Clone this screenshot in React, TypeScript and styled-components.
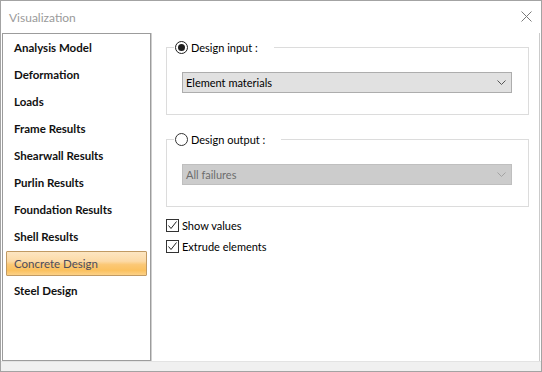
import { styled, createGlobalStyle } from 'styled-components';

const GlobalStyle = createGlobalStyle`
  html, body {
    margin: 0;
    padding: 0;
    background: #ffffff;
  }
  body {
    font-family: Lato, 'Noto Sans', sans-serif;
    font-size: 11px;
    color: #000;
  }
`;

const Window = styled.div`
  width: 542px;
  height: 372px;
  box-sizing: border-box;
  border: 1px solid #a3a3a3;
  background: #ffffff;
  display: flex;
  flex-direction: column;
`;

const TitleBar = styled.div`
  height: 32px;
  flex: none;
  display: flex;
  align-items: center;
  justify-content: space-between;
  padding: 0 9px 0 8px;
`;

const Title = styled.span`
  color: #9a9a9a;
  font-size: 12px;
`;

const CloseButton = styled.button`
  border: none;
  background: none;
  padding: 0;
  width: 11px;
  height: 11px;
  display: flex;
  margin-top: -2px;
`;

const Body = styled.div`
  flex: 1;
  display: flex;
  padding: 0 1px;
  min-height: 0;
`;

const NavList = styled.ul`
  width: 149px;
  box-sizing: border-box;
  height: 328px;
  margin: 0;
  padding: 1px 3px;
  list-style: none;
  border: 1px solid #9c9c9c;
  background: #fff;
  display: flex;
  flex-direction: column;
  gap: 2px;
`;

const NavItem = styled.li<{ $active?: boolean }>`
  height: 25px;
  flex: none;
  box-sizing: border-box;
  display: flex;
  align-items: center;
  padding-left: 7px;
  border: 1px solid ${(p) => (p.$active ? '#c19a63' : 'transparent')};
  border-radius: 1px;
  font-size: 11.5px;
  font-weight: ${(p) => (p.$active ? 400 : 700)};
  color: ${(p) => (p.$active ? '#4c4c5e' : '#111')};
  background: ${(p) =>
    p.$active
      ? 'linear-gradient(#fde6c2 0%, #fcdaa6 40%, #fbc875 55%, #fbc15f 80%, #fcd187 100%)'
      : 'transparent'};
`;

const Panel = styled.div`
  width: 389px;
  height: 329px;
  box-sizing: border-box;
  border-left: 1px solid #cfcfcf;
  border-right: 1px solid #cbcbcb;
  padding: 6px 10px 0 14px;
  display: flex;
  flex-direction: column;
`;

const Group = styled.fieldset<{ $gapTop?: number }>`
  margin: ${(p) => p.$gapTop ?? 0}px 0 0 0;
  border: 1px solid #dcdcdc;
  padding: 17px 16px 21px 15px;
  min-width: 0;
`;

const Legend = styled.legend`
  margin-left: -8px;
  padding: 0 16px 0 1px;
  height: 16px;
  display: flex;
  align-items: center;
  gap: 3px;
`;

const Radio = styled.span<{ $checked?: boolean }>`
  width: 13px;
  height: 13px;
  box-sizing: border-box;
  border-radius: 50%;
  border: 1px solid ${(p) => (p.$checked ? '#1e1e1e' : '#333')};
  display: flex;
  align-items: center;
  justify-content: center;
  background: #fff;

  &::after {
    content: '';
    width: 7px;
    height: 7px;
    border-radius: 50%;
    background: ${(p) => (p.$checked ? '#1e1e1e' : 'transparent')};
  }
`;

const Combo = styled.div<{ $disabled?: boolean }>`
  height: 21px;
  box-sizing: border-box;
  border: 1px solid ${(p) => (p.$disabled ? '#bfbfbf' : '#adadad')};
  background: ${(p) => (p.$disabled ? '#cccccc' : '#e1e1e1')};
  color: ${(p) => (p.$disabled ? '#6d6d6d' : '#000')};
  display: flex;
  align-items: center;
  justify-content: space-between;
  padding: 0 5px 0 3px;
`;

const CheckRow = styled.label<{ $first?: boolean }>`
  height: 21px;
  display: flex;
  align-items: center;
  gap: 3px;
  margin-top: ${(p) => (p.$first ? 8 : 0)}px;
`;

const Box = styled.span`
  width: 13px;
  height: 13px;
  box-sizing: border-box;
  border: 1px solid #333;
  background: #fff;
  display: flex;
`;

const Chevron = ({ color }: { color: string }) => (
  <svg width="9" height="5" viewBox="0 0 9 5">
    <path d="M0.5 0.5 L4.5 4.5 L8.5 0.5" fill="none" stroke={color} strokeWidth="1" />
  </svg>
);

const Check = () => (
  <svg width="11" height="11" viewBox="0 0 11 11">
    <path d="M1.5 5.5 L4 8.5 L9.5 1.5" fill="none" stroke="#222" strokeWidth="1" />
  </svg>
);

const items = [
  'Analysis Model',
  'Deformation',
  'Loads',
  'Frame Results',
  'Shearwall Results',
  'Purlin Results',
  'Foundation Results',
  'Shell Results',
  'Concrete Design',
  'Steel Design',
];

const BottomStrip = styled.div`
  height: 9px;
  flex: none;
  background: #f0f0f0;
  border-top: 1px solid #e3e3e3;
`;

export default function App() {
  return (
    <>
      <GlobalStyle />
      <Window>
        <TitleBar>
          <Title>Visualization</Title>
          <CloseButton aria-label="Close">
            <svg width="11" height="11" viewBox="0 0 11 11">
              <path d="M0.5 0.5 L10.5 10.5 M10.5 0.5 L0.5 10.5" stroke="#7a7a7a" strokeWidth="1" />
            </svg>
          </CloseButton>
        </TitleBar>
        <Body>
          <NavList>
            {items.map((it) => (
              <NavItem key={it} $active={it === 'Concrete Design'}>
                {it}
              </NavItem>
            ))}
          </NavList>
          <Panel>
            <Group>
              <Legend>
                <Radio $checked />
                Design input :
              </Legend>
              <Combo>
                Element materials
                <Chevron color="#555" />
              </Combo>
            </Group>
            <Group $gapTop={16}>
              <Legend>
                <Radio />
                Design output :
              </Legend>
              <Combo $disabled>
                All failures
                <Chevron color="#a3a3a3" />
              </Combo>
            </Group>
            <CheckRow $first>
              <Box>
                <Check />
              </Box>
              Show values
            </CheckRow>
            <CheckRow>
              <Box>
                <Check />
              </Box>
              Extrude elements
            </CheckRow>
          </Panel>
        </Body>
        <BottomStrip />
      </Window>
    </>
  );
}
